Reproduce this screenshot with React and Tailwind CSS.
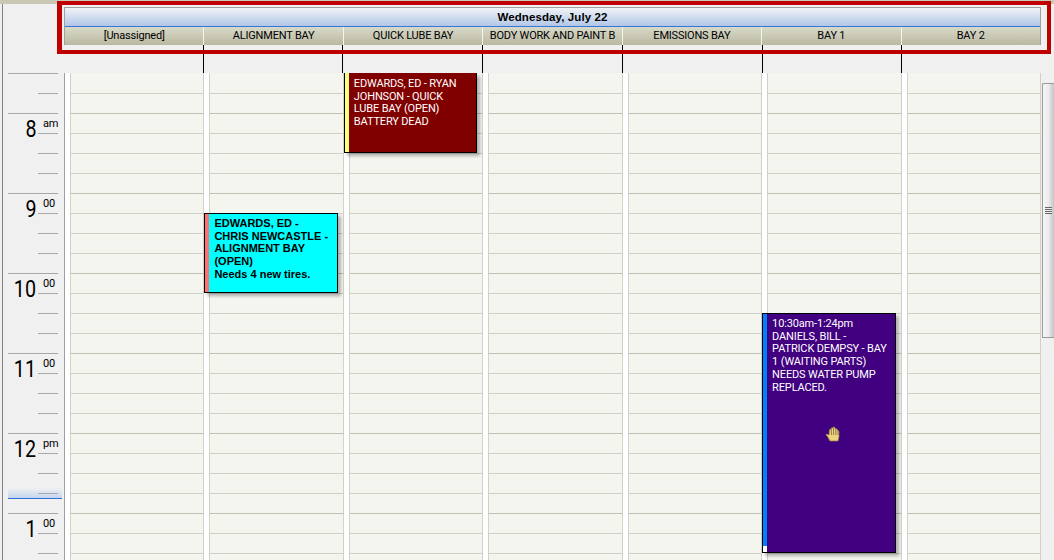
import React from 'react';

const bays = ['[Unassigned]', 'ALIGNMENT BAY', 'QUICK LUBE BAY', 'BODY WORK AND PAINT B', 'EMISSIONS BAY', 'BAY 1', 'BAY 2'];

const hours = [
  { num: '8', sup: 'am' },
  { num: '9', sup: '00' },
  { num: '10', sup: '00' },
  { num: '11', sup: '00' },
  { num: '12', sup: 'pm' },
  { num: '1', sup: '00' },
];

const HandCursor = () => (
  <svg width="16" height="16" viewBox="0 0 16 16" className="absolute left-[62px] top-[112px]">
    <path
      d="M5 15 L2.5 10.5 L1 9 L1.5 8 L4 9 L4.5 3.5 L5.8 3.2 L6.3 2 L7.6 2 L8.2 1 L9.6 1.2 L10 2.4 L11.4 2.6 L12 3.6 L13.2 4.6 L14 5.4 L14 11 L13 15 Z"
      fill="#ecd57e"
      stroke="#8a7a40"
      strokeWidth="0.7"
    />
    <path d="M6.4 3 V9 M8.6 2 V9 M10.8 3 V9 M13 5 V9" stroke="#7a6a38" strokeWidth="0.8" fill="none" />
  </svg>
);

const Appointment = ({ className, stripe, bold, textTop, lines, children }) => (
  <div className={`absolute border border-black shadow-[3px_3px_3px_rgba(0,0,0,0.28)] ${className}`}>
    <div className={`absolute left-0 top-0 bottom-0 w-[4px] ${stripe}`} />
    <div className={`pl-[9px] ${textTop} leading-[12.7px] ${bold ? "font-['Liberation_Sans',sans-serif] text-[11px] font-bold text-black" : 'text-[11px] tracking-[-0.15px] text-white'}`}>
      {lines.map((line) => (
        <div key={line} className="whitespace-nowrap">{line}</div>
      ))}
    </div>
    {children}
  </div>
);

// one hour of the grid: 4 slots, 20px each, first slot has the darker line
const HourCells = () => (
  <div className="flex flex-col">
    <div className="h-[20px] -mx-px border-t border-x border-t-[#c2c2b2] border-x-[#d4d4c2] box-border" />
    <div className="h-[20px] border-t border-[#cfd0c8] box-border" />
    <div className="h-[20px] border-t border-[#cfd0c8] box-border" />
    <div className="h-[20px] border-t border-[#cfd0c8] box-border" />
  </div>
);

const BayColumn = ({ children }) => (
  <div className="relative flex-1 min-w-0 flex">
    <div className="w-[5px] shrink-0 bg-white" />
    <div className="relative flex-1 min-w-0 bg-[#f5f5f0] border-x border-[#cfd0cc]">
      <div className="h-[20px]" />
      <div className="h-[20px] border-t border-[#cfd0c8] box-border" />
      {hours.map((h) => (
        <HourCells key={h.num} />
      ))}
    </div>
    {children}
  </div>
);

const HourLabel = ({ num, sup }) => (
  <div className="relative h-[80px]">
    <div className="absolute left-[5px] right-[6px] top-0 h-px bg-[#a9a9a9]" />
    <div className="absolute left-[35px] right-[6px] top-[20px] h-px bg-[#a9a9a9]" />
    <div className="absolute left-[35px] right-[6px] top-[40px] h-px bg-[#a9a9a9]" />
    <div className="absolute left-[35px] right-[6px] top-[60px] h-px bg-[#a9a9a9]" />
    <div className="flex justify-end pr-[7px] pt-[1px]">
      <span className="text-[24px] leading-[30px] text-black origin-right scale-x-[0.82]">{num}</span>
      <span className="w-[21px] pl-[7px] pt-[3px] text-[11px] tracking-[-0.3px] leading-[13px] text-black">{sup}</span>
    </div>
  </div>
);

export default function App() {
  return (
    <div className="relative w-[1054px] h-[560px] overflow-hidden bg-[#f0f0f0] font-['Roboto',sans-serif]">
      {/* window top edge */}
      <div className="h-[4px] bg-[#c8c8b4]" />

      <div className="flex h-[556px]">
        <div className="w-[2px] shrink-0 bg-[#f0f0f0]" />
        <div className="w-[1px] shrink-0 bg-[#808080]" />

        <div className="flex-1 min-w-0 bg-[#f0f0f0]">
          {/* header */}
          <div className="pl-[61px] pr-[13px] pt-[3px]">
            <div className="border-t border-x border-[#a0a0a0] h-[20px] flex items-center justify-center bg-gradient-to-b from-[#f1f3f6] to-[#aec4e6] shadow-[inset_0_-1px_0_#3a74d8]">
              <span className="font-['Liberation_Sans',sans-serif] text-[11.5px] tracking-[0.1px] font-bold text-black">Wednesday, July 22</span>
            </div>
            <div className="flex h-[18px] bg-gradient-to-b from-[#d9d9c9] to-[#b9b9a1] border-x border-[#a0a0a0]">
              {bays.map((bay, i) => (
                <div key={bay} className={`flex-1 min-w-0 flex items-center justify-center pt-px text-[11px] tracking-[-0.2px] text-black whitespace-nowrap overflow-hidden ${i > 0 ? 'border-l border-[#f4f4ec]' : ''}`}>
                  {bay}
                </div>
              ))}
            </div>
          </div>

          {/* ticks under the bay header */}
          <div className="pl-[61px] pr-[13px] flex h-[28px]">
            {bays.map((bay, i) => (
              <div key={bay} className={`flex-1 min-w-0 ${i > 0 ? 'border-l border-black' : ''}`} />
            ))}
          </div>

          {/* body */}
          <div className="flex">
            <div className="w-[61px] shrink-0 relative">
              {/* current time marker sits under the tick lines */}
              <div className="absolute left-[5px] right-[2px] top-[415px] h-[11px] bg-gradient-to-b from-[#f0f0f0] to-[#c4d5f0] border-b border-[#2f6fd6]" />
              <div className="relative h-[40px]">
                <div className="absolute left-[5px] right-[6px] top-0 h-px bg-[#a9a9a9]" />
                <div className="absolute left-[35px] right-[6px] top-[20px] h-px bg-[#a9a9a9]" />
              </div>
              {hours.map((h) => (
                <HourLabel key={h.num} num={h.num} sup={h.sup} />
              ))}
            </div>
            <div className="w-px shrink-0 bg-[#a0a0a0]" />

            <div className="flex-1 min-w-0 flex">
              {bays.map((bay, i) => (
                <BayColumn key={bay}>
                  {i === 1 && (
                    <Appointment
                      className="left-0 right-[6px] top-[140px] h-[80px] bg-[#00ffff]"
                      stripe="bg-[#ff7070]"
                      textTop="pt-[3px]"
                      bold
                      lines={['EDWARDS, ED -', 'CHRIS NEWCASTLE -', 'ALIGNMENT BAY', '(OPEN)', 'Needs 4 new tires.']}
                    />
                  )}
                  {i === 2 && (
                    <Appointment
                      className="left-0 right-[6px] top-0 h-[80px] bg-[#800000] border-t-0"
                      stripe="bg-[#ffff80]"
                      textTop="pt-[5px]"
                      lines={['EDWARDS, ED - RYAN', 'JOHNSON - QUICK', 'LUBE BAY (OPEN)', 'BATTERY DEAD']}
                    />
                  )}
                  {i === 5 && (
                    <Appointment
                      className="left-0 right-[6px] top-[240px] h-[240px] bg-[#400080]"
                      stripe="bg-[#0080ff]"
                      textTop="pt-[4px]"
                      lines={['10:30am-1:24pm', 'DANIELS, BILL -', 'PATRICK DEMPSY - BAY', '1 (WAITING PARTS)', 'NEEDS WATER PUMP', 'REPLACED.']}
                    >
                      <HandCursor />
                      <div className="absolute left-0 bottom-0 w-[4px] h-[6px] bg-white" />
                    </Appointment>
                  )}
                </BayColumn>
              ))}
            </div>

            {/* scrollbar */}
            <div className="w-[12px] shrink-0 ml-px pt-[10px]">
              <div className="h-[255px] flex items-center justify-center bg-gradient-to-r from-[#f6f6f6] via-[#ececec] to-[#c4c4c8] border-t border-l border-b border-[#9a9a9a] rounded-tl-[2px]">
                <div className="w-[7px] h-[7px] bg-[repeating-linear-gradient(180deg,#666_0,#666_1px,#eee_1px,#eee_2px)]" />
              </div>
            </div>
          </div>
        </div>
      </div>

      {/* small splitter mark right of the header */}
      <div className="absolute left-[1047px] top-[16px] w-[4px] h-px bg-[#808080]" />

      {/* red highlight drawn over the screenshot */}
      <div className="absolute left-[57px] top-[1px] w-[994px] h-[53px] border-[4px] border-l-[5px] border-[#c00000] pointer-events-none" />
    </div>
  );
}
